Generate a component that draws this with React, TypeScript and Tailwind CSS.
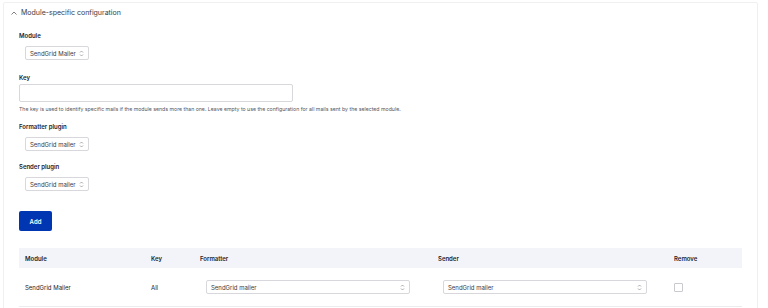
import React from 'react';

const font = { fontFamily: 'Inter, "Noto Sans", sans-serif' };

const Arrows = () => (
  <svg width="5" height="7" viewBox="0 0 10 14" fill="none" stroke="#8a8a8a" strokeWidth="1.4" className="shrink-0">
    <path d="M2 5l3-3 3 3M2 9l3 3 3-3" />
  </svg>
);

const Select: React.FC<{ label: string; className?: string }> = ({ label, className = '' }) => (
  <div
    className={`flex items-center justify-between gap-[3px] h-[14px] px-[4px] border border-[#d8d8dc] rounded-[2px] bg-white text-[6px] text-[#3b3b3b] whitespace-nowrap ${className}`}
  >
    <span>{label}</span>
    <Arrows />
  </div>
);

const Label: React.FC<{ children: React.ReactNode }> = ({ children }) => (
  <div className="text-[6px] font-semibold text-[#222330] leading-[8px]">{children}</div>
);

export default function App() {
  return (
    <div className="w-[768px] h-[308px] bg-white overflow-hidden pl-[3px] pt-[2px]" style={font}>
      <div className="w-[755px] h-[320px] border border-[#f0f0f2] rounded-[2px]">
        {/* Summary */}
        <div className="flex items-center gap-[4px] pl-[7px] h-[20px] text-[7px] text-[#3a3b42]">
          <svg width="6" height="4" viewBox="0 0 12 8" fill="none" stroke="#555" strokeWidth="1.5">
            <path d="M1 7l5-5 5 5" />
          </svg>
          <span>Module-specific configuration</span>
        </div>

        <div className="pl-[15px] pr-[15px]">
          {/* Module */}
          <div className="mt-[9px]">
            <Label>Module</Label>
            <Select label="SendGrid Mailer" className="w-fit mt-[6px] ml-[6px]" />
          </div>

          {/* Key */}
          <div className="mt-[14px]">
            <Label>Key</Label>
            <div className="w-[274px] h-[18px] mt-[2px] border border-[#d8d8dc] rounded-[2px]" />
            <div className="text-[5.2px] text-[#55565c] mt-[4px] leading-[6px] whitespace-nowrap">
              The key is used to identify specific mails if the module sends more than one. Leave empty to use the
              configuration for all mails sent by the selected module.
            </div>
          </div>

          {/* Formatter plugin */}
          <div className="mt-[11px]">
            <Label>Formatter plugin</Label>
            <Select label="SendGrid mailer" className="w-fit mt-[6px] ml-[6px]" />
          </div>

          {/* Sender plugin */}
          <div className="mt-[12px]">
            <Label>Sender plugin</Label>
            <Select label="SendGrid mailer" className="w-fit mt-[6px] ml-[6px]" />
          </div>

          <button className="mt-[20px] w-[33px] h-[20px] bg-[#0036b1] rounded-[2px] text-white text-[6px] font-semibold">
            Add
          </button>

          {/* Table */}
          <div className="mt-[17px] w-[723px] text-[6px] text-[#232429]">
            <div className="flex items-center h-[20px] bg-[#f3f4f9] font-semibold">
              <div className="w-[132px] pl-[6px]">Module</div>
              <div className="w-[49px]">Key</div>
              <div className="w-[238px]">Formatter</div>
              <div className="w-[236px]">Sender</div>
              <div>Remove</div>
            </div>
            <div className="flex items-center h-[39px] border-b border-[#ececf0]">
              <div className="w-[132px] pl-[6px]">SendGrid Mailer</div>
              <div className="w-[49px]">All</div>
              <div className="w-[238px] pl-[6px]">
                <Select label="SendGrid mailer" className="w-[204px]" />
              </div>
              <div className="w-[236px] pl-[5px]">
                <Select label="SendGrid mailer" className="w-[204px]" />
              </div>
              <div className="w-[9px] h-[9px] border border-[#c9cad0] rounded-[1px]" />
            </div>
          </div>
        </div>
      </div>
    </div>
  );
}
